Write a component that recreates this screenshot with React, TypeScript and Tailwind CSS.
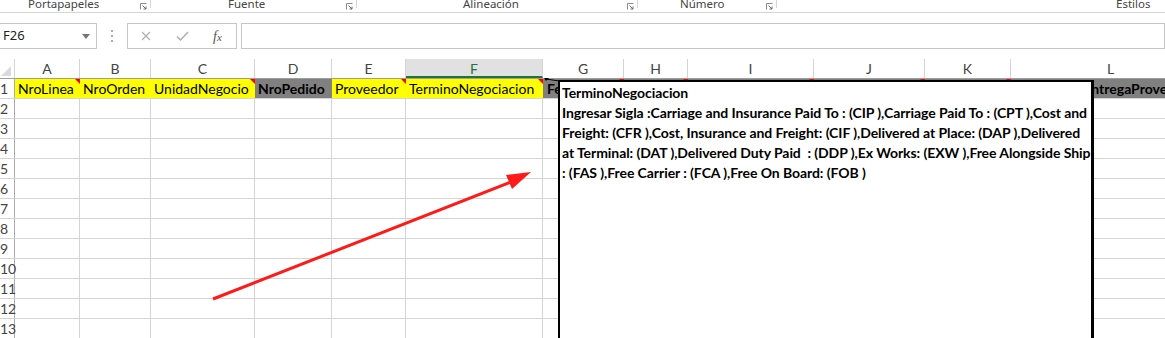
import type { ReactNode } from 'react';

type Col = { id: string; w: number };

const cols: Col[] = [
  { id: 'A', w: 65 },
  { id: 'B', w: 71 },
  { id: 'C', w: 104 },
  { id: 'D', w: 77 },
  { id: 'E', w: 74 },
  { id: 'F', w: 137 },
  { id: 'G', w: 81 },
  { id: 'H', w: 64 },
  { id: 'I', w: 126 },
  { id: 'J', w: 111 },
  { id: 'K', w: 86 },
  { id: 'L', w: 200 },
];

type HeadCell = { text: string; fill: 'yellow' | 'gray'; note?: boolean; pad?: string };

const headRow: HeadCell[] = [
  { text: 'NroLinea', fill: 'yellow', note: true },
  { text: 'NroOrden', fill: 'yellow' },
  { text: 'UnidadNegocio', fill: 'yellow', note: true },
  { text: 'NroPedido', fill: 'gray' },
  { text: 'Proveedor', fill: 'yellow', note: true },
  { text: 'TerminoNegociacion', fill: 'yellow', note: true },
  { text: 'FechaPedido', fill: 'gray', note: true, pad: 'pl-[4px]' },
  { text: '', fill: 'gray', note: true },
  { text: '', fill: 'gray', note: true },
  { text: '', fill: 'gray', note: true },
  { text: '', fill: 'gray', note: true },
  { text: 'FechaEntregaProveedor', fill: 'gray', pad: 'pl-[36px]' },
];

const groups = [
  { label: 'Portapapeles', w: 151, pad: 'pl-[28px]', launcher: true },
  { label: 'Fuente', w: 206, pad: 'pl-[77px]', launcher: true },
  { label: 'Alineación', w: 281, pad: 'pl-[106px]', launcher: true },
  { label: 'Número', w: 139, pad: 'pl-[42px]', launcher: true },
  { label: 'Estilos', w: 388, pad: 'pl-[339px]', launcher: false },
];

const commentLines = [
  'TerminoNegociacion',
  'Ingresar Sigla :Carriage and Insurance Paid To : (CIP ),Carriage Paid To : (CPT ),Cost and',
  'Freight: (CFR ),Cost, Insurance and Freight: (CIF ),Delivered at Place: (DAP ),Delivered',
  'at Terminal: (DAT ),Delivered Duty Paid  : (DDP ),Ex Works: (EXW ),Free Alongside Ship',
  ': (FAS ),Free Carrier : (FCA ),Free On Board: (FOB )',
];

function Launcher() {
  return (
    <svg width="7" height="7" viewBox="0 0 7 7" className="mt-[3px]">
      <path d="M0.5 6.5V0.5H6.5" fill="none" stroke="#8a8a8a" strokeWidth="1" />
      <path d="M2.5 2.5L6 6M6 3.5V6H3.5" fill="none" stroke="#6a6a6a" strokeWidth="1" />
    </svg>
  );
}

function Note() {
  return (
    <span className="absolute right-0 top-0 h-0 w-0 border-l-[5px] border-t-[5px] border-l-transparent border-t-[#ff0000]" />
  );
}

function Cell({ w, className, children }: { w: number; className?: string; children?: ReactNode }) {
  return (
    <div
      className={`relative h-full shrink-0 overflow-hidden border-r border-[#d4d4d4] ${className ?? ''}`}
      style={{ width: w }}
    >
      {children}
    </div>
  );
}

export default function App() {
  const rows = Array.from({ length: 12 }, (_, i) => i + 2);

  return (
    <div className="relative h-[338px] w-[1165px] overflow-hidden bg-white font-['Lato',sans-serif] text-black">
      {/* ribbon group labels */}
      <div className="flex h-[13px] overflow-hidden border-b border-[#d5d5d5] font-['Noto_Sans',sans-serif] text-[11.5px] leading-[12px] text-[#444]">
        {groups.map((g) => (
          <div key={g.label} className="flex shrink-0 items-start" style={{ width: g.w }}>
            <span className={`${g.pad} -mt-[2px] whitespace-nowrap`}>{g.label}</span>
            {g.launcher && (
              <div className="ml-auto flex h-[8px] items-start">
                <Launcher />
                <span className="ml-[3px] h-[8px] w-px bg-[#d5d5d5]" />
              </div>
            )}
          </div>
        ))}
      </div>

      {/* formula bar */}
      <div className="mt-[10px] flex h-[26px] items-stretch">
        <div className="flex w-[97px] shrink-0 items-center justify-between border-y border-r border-[#c6c6c6] pl-[3px] pr-[6px] font-['Noto_Sans',sans-serif] text-[13px] text-[#222]">
          <span>F26</span>
          <span className="h-0 w-0 border-x-[4px] border-t-[5px] border-x-transparent border-t-[#777]" />
        </div>
        <div className="flex w-[30px] shrink-0 flex-col items-center justify-center gap-[3px]">
          <span className="h-[2px] w-[2px] bg-[#a8a8a8]" />
          <span className="h-[2px] w-[2px] bg-[#a8a8a8]" />
          <span className="h-[2px] w-[2px] bg-[#a8a8a8]" />
        </div>
        <div className="flex w-[110px] shrink-0 items-center border border-[#c6c6c6]">
          <svg width="10" height="10" viewBox="0 0 10 10" className="ml-[13px]">
            <path d="M1 1L9 9M9 1L1 9" stroke="#b0b0b0" strokeWidth="1.3" />
          </svg>
          <svg width="13" height="10" viewBox="0 0 13 10" className="ml-[25px]">
            <path d="M1 5.5L4.5 9L12 1" fill="none" stroke="#b0b0b0" strokeWidth="1.5" />
          </svg>
          <span className="ml-[24px] font-['Liberation_Serif',serif] text-[14px] italic text-[#555]">
            f<span className="text-[11px]">x</span>
          </span>
        </div>
        <div className="ml-[4px] flex-1 border border-[#c6c6c6]" />
      </div>

      {/* column headers */}
      <div className="mt-[10px] flex h-[20px] border-b border-[#9e9e9e] text-[14px] leading-[19px] text-[#444]">
        <div className="flex w-[15px] shrink-0 items-end justify-end border-r border-[#d4d4d4] pb-[2px] pr-[3px]">
          <svg width="10" height="10" viewBox="0 0 10 10">
            <path d="M10 0V10H0Z" fill="#dadada" />
          </svg>
        </div>
        {cols.map((c) => (
          <Cell
            key={c.id}
            w={c.w}
            className={
              c.id === 'F'
                ? 'border-b-2 border-b-[#217346] bg-[#e1e1e1] text-center text-[#217346]'
                : 'text-center'
            }
          >
            {c.id}
          </Cell>
        ))}
      </div>

      {/* row 1 */}
      <div className="flex h-[20px] border-b border-[#d4d4d4] text-[14px] leading-[20px]">
        <div className="w-[15px] shrink-0 border-r border-[#ababab] pr-[6px] text-right text-[#444]">1</div>
        {cols.map((c, i) => {
          const h = headRow[i];
          return (
            <div
              key={c.id}
              className={`relative h-full shrink-0 overflow-hidden whitespace-nowrap ${
                h.fill === 'yellow' ? 'bg-[#ffff00]' : 'bg-[#808080] font-bold'
              } ${h.pad ?? 'pl-[3px]'}`}
              style={{ width: c.w }}
            >
              {h.text}
              {h.note && <Note />}
            </div>
          );
        })}
      </div>

      {/* empty rows */}
      {rows.map((r) => (
        <div key={r} className="flex h-[20px] border-b border-[#d4d4d4] text-[14px] leading-[20px]">
          <div className="w-[15px] shrink-0 whitespace-nowrap border-r border-[#ababab] pr-[6px] text-right text-[#444]">
            {r}
          </div>
          {cols.map((c) => (
            <Cell key={c.id} w={c.w} />
          ))}
        </div>
      ))}

      {/* comment box */}
      <div className="absolute left-[558px] top-[80px] h-[280px] w-[536px] border-l-2 border-r-[3px] border-t-2 border-black bg-white pl-[2px] pt-[1px] text-[14px] font-bold leading-[20px] tracking-[-0.07px]">
        {commentLines.map((l, i) => (
          <div key={i} className="whitespace-pre">
            {l}
          </div>
        ))}
      </div>

      {/* comment leader and red arrow */}
      <svg className="pointer-events-none absolute left-0 top-0" width="1165" height="338">
        <path d="M546 79L559 81" stroke="#000" strokeWidth="1" />
        <path d="M544 78L549 78L546 81Z" fill="#000" />
        <line x1="213" y1="299" x2="516" y2="180" stroke="#ff1a1a" strokeWidth="3" />
        <polygon points="531,172 506,175 512,189" fill="#ff1a1a" />
      </svg>
    </div>
  );
}
